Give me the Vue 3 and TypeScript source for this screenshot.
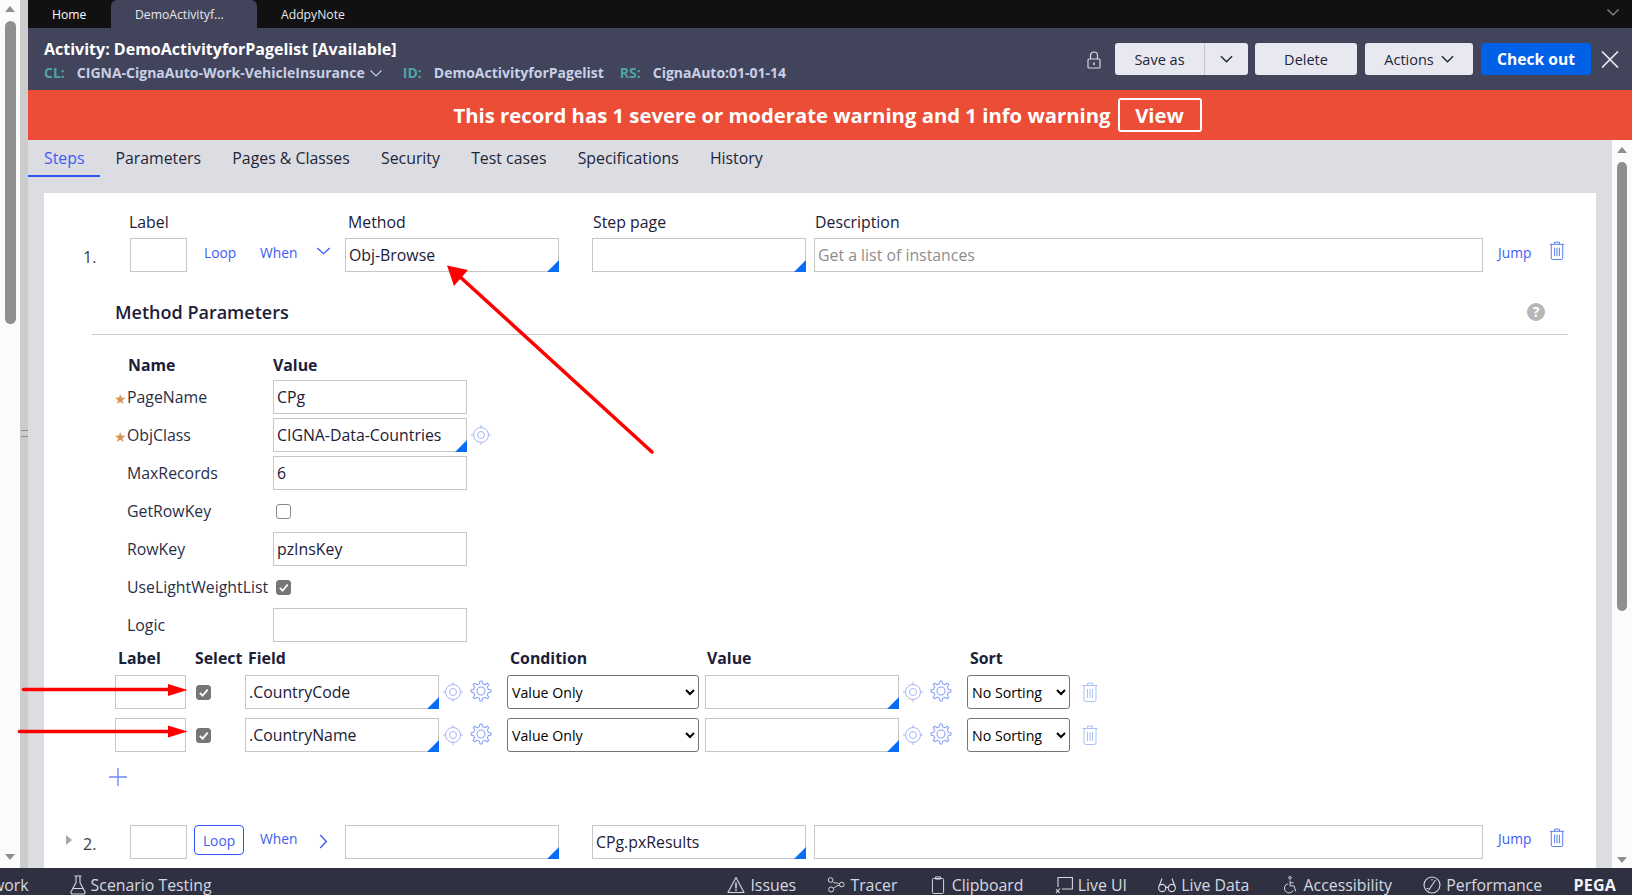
<script setup lang="ts">
const tabs = ['Steps', 'Parameters', 'Pages & Classes', 'Security', 'Test cases', 'Specifications', 'History']

interface Param { name: string; req?: boolean; kind: 'text' | 'auto' | 'check'; value?: string; checked?: boolean }
const params: Param[] = [
  { name: 'PageName', req: true, kind: 'text', value: 'CPg' },
  { name: 'ObjClass', req: true, kind: 'auto', value: 'CIGNA-Data-Countries' },
  { name: 'MaxRecords', kind: 'text', value: '6' },
  { name: 'GetRowKey', kind: 'check', checked: false },
  { name: 'RowKey', kind: 'text', value: 'pzInsKey' },
  { name: 'UseLightWeightList', kind: 'check', checked: true },
  { name: 'Logic', kind: 'text', value: '' },
]
const fields = ['.CountryCode', '.CountryName']

const tools = [
  { icon: 'i-warn', label: 'Issues' },
  { icon: 'i-tracer', label: 'Tracer' },
  { icon: 'i-clip', label: 'Clipboard' },
  { icon: 'i-liveui', label: 'Live UI' },
  { icon: 'i-glasses', label: 'Live Data' },
  { icon: 'i-access', label: 'Accessibility' },
  { icon: 'i-gauge', label: 'Performance' },
]

function gearPath(): string {
  const pts: string[] = []
  const teeth = 8
  for (let i = 0; i < teeth; i++) {
    const a = (i / teeth) * Math.PI * 2
    const step = (Math.PI * 2) / teeth
    const seq: [number, number][] = [[7.4, -0.5], [7.4, -0.27], [10, -0.14], [10, 0.14], [7.4, 0.27]]
    for (const [r, f] of seq) {
      const t = a + f * step
      pts.push(`${(11 + r * Math.sin(t)).toFixed(2)} ${(11 - r * Math.cos(t)).toFixed(2)}`)
    }
  }
  return 'M' + pts.join('L') + 'Z'
}
const gear = gearPath()
</script>

<template>
  <div class="app">
    <svg class="defs" width="0" height="0" aria-hidden="true">
      <defs>
        <symbol id="i-target" viewBox="0 0 20 20">
          <g fill="none" stroke="currentColor" stroke-width="1">
            <circle cx="10" cy="10" r="7.5" />
            <circle cx="10" cy="10" r="3.5" />
            <path d="M10 0v2.5M10 17.5V20M0 10h2.5M17.5 10H20" />
          </g>
        </symbol>
        <symbol id="i-gear" viewBox="0 0 22 22">
          <g fill="none" stroke="currentColor" stroke-width="1.1" stroke-linejoin="round">
            <path :d="gear" />
            <circle cx="11" cy="11" r="4" />
          </g>
        </symbol>
        <symbol id="i-trash" viewBox="0 0 16 20">
          <g fill="none" stroke="currentColor" stroke-width="1">
            <path d="M0.5 3.5h15M5.5 3.5V1.2h5v2.3M2 3.5v14.6a1.4 1.4 0 0 0 1.4 1.4h9.2a1.4 1.4 0 0 0 1.4-1.4V3.5" />
            <path d="M5.5 7v9M8 7v9M10.5 7v9" />
          </g>
        </symbol>
        <symbol id="i-warn" viewBox="0 0 18 18">
          <g fill="none" stroke="currentColor" stroke-width="1.1">
            <path d="M9 1.5 17 16.5H1Z" stroke-linejoin="round" />
            <path d="M9 6.5v6M9 13.6v1.4" stroke-width="1.6" />
          </g>
        </symbol>
        <symbol id="i-tracer" viewBox="0 0 20 18">
          <g fill="none" stroke="currentColor" stroke-width="1.1">
            <circle cx="4" cy="3.5" r="2.6" />
            <circle cx="16.4" cy="8.5" r="2.6" />
            <circle cx="4.6" cy="14" r="2.8" />
            <path d="M6.3 5C8 8.5 11 5 13.8 8.2M14 9.5C11.5 9.2 9.5 10.8 7.2 12.8" />
          </g>
        </symbol>
        <symbol id="i-clip" viewBox="0 0 14 20">
          <g fill="none" stroke="currentColor" stroke-width="1.1">
            <rect x="0.8" y="2.8" width="12.4" height="16.6" rx="1.2" />
            <path d="M4.2 3V1h5.6v2.4H4.2Z" />
          </g>
        </symbol>
        <symbol id="i-liveui" viewBox="0 0 18 18">
          <g fill="none" stroke="currentColor" stroke-width="1.1">
            <path d="M3 11V1.5h14.4v11.5H7" />
            <path d="M1 17 5 12.5M1.2 13.5l3.4 3.4" />
          </g>
        </symbol>
        <symbol id="i-glasses" viewBox="0 0 18 16">
          <g fill="none" stroke="currentColor" stroke-width="1.1">
            <circle cx="4.2" cy="11" r="3.6" />
            <circle cx="13.8" cy="11" r="3.6" />
            <path d="M7.6 10.4h2.8M1 9.5 4 1.5M17 9.5 14 1.5" />
          </g>
        </symbol>
        <symbol id="i-access" viewBox="0 0 16 20">
          <g fill="none" stroke="currentColor" stroke-width="1.1">
            <circle cx="8" cy="2" r="1.4" />
            <path d="M8 5v6h4.4l2 6M8 7.6h4" />
            <path d="M5.6 8.6a5.2 5.2 0 1 0 6 7.4" />
          </g>
        </symbol>
        <symbol id="i-gauge" viewBox="0 0 18 18">
          <g fill="none" stroke="currentColor" stroke-width="1.1">
            <circle cx="9" cy="9" r="8" />
            <path d="M5.5 14.5 12.5 4M3.5 12.5h2M9 3V4.5" />
          </g>
        </symbol>
        <symbol id="i-flask" viewBox="0 0 16 20">
          <g fill="none" stroke="currentColor" stroke-width="1.1">
            <path d="M4.5 1h7M6 1v6.5L1 17a1.4 1.4 0 0 0 1.2 2h11.6A1.4 1.4 0 0 0 15 17L10 7.500V1M3.500 13.500h9" />
          </g>
        </symbol>
      </defs>
    </svg>

    <div class="upper">
      <div class="outer-scroll">
        <span class="tri up outer-up"></span>
        <span class="outer-thumb"></span>
        <span class="tri down outer-down"></span>
      </div>
      <div class="splitter"><span class="grip"></span></div>

      <div class="main">
        <div class="doc-tabs">
          <span class="doc-tab first">Home</span>
          <span class="doc-tab active">DemoActivityf...</span>
          <span class="doc-tab last">AddpyNote</span>
          <svg class="doc-more" viewBox="0 0 12 7" width="12" height="7">
            <path d="M0.5 0.5 6 6 11.500 0.500" fill="none" stroke="#8e8f96" stroke-width="1.2" />
          </svg>
        </div>

        <header class="rule-head">
          <div class="titles">
            <div class="title">Activity: DemoActivityforPagelist [Available]</div>
            <div class="meta">
              <span class="k">CL:</span><span class="v">CIGNA-CignaAuto-Work-VehicleInsurance</span>
              <svg class="meta-chev" viewBox="0 0 12 7" width="12" height="7">
                <path d="M0.500 0.500 6 6 11.500 0.500" fill="none" stroke="#c9d0e6" stroke-width="1.1" />
              </svg>
              <span class="k id">ID:</span><span class="v">DemoActivityforPagelist</span>
              <span class="k rs">RS:</span><span class="v">CignaAuto:01-01-14</span>
            </div>
          </div>
          <div class="actions">
            <svg class="lock" viewBox="0 0 14 18" width="14" height="18">
              <g fill="none" stroke="#d5d8e4" stroke-width="1.2">
                <path d="M3.500 8V4.500a3.500 3.500 0 0 1 7 0V8" />
                <rect x="1" y="8" width="12" height="9" rx="1" />
                <path d="M7 11.500v2.500" stroke-width="1.600" />
              </g>
            </svg>
            <div class="btn-split">
              <button class="btn save">Save as</button>
              <button class="btn caret">
                <svg viewBox="0 0 14 8" width="13" height="8"><path d="M1 1 7 7 13 1" fill="none" stroke="#22253a" stroke-width="1.500" /></svg>
              </button>
            </div>
            <button class="btn delete">Delete</button>
            <button class="btn acts">Actions
              <svg viewBox="0 0 14 8" width="13" height="8"><path d="M1 1 7 7 13 1" fill="none" stroke="#22253a" stroke-width="1.500" /></svg>
            </button>
            <button class="btn checkout">Check out</button>
            <svg class="close" viewBox="0 0 18 17" width="18" height="17">
              <path d="M1 0.500 17 16.500M17 0.500 1 16.500" stroke="#e8e9f0" stroke-width="1.700" fill="none" />
            </svg>
          </div>
        </header>

        <div class="banner">
          <span>This record has 1 severe or moderate warning and 1 info warning</span>
          <button class="view">View</button>
        </div>

        <div class="body">
          <div class="work">
            <nav class="rule-tabs">
              <span v-for="(t, i) in tabs" :key="t" class="rule-tab" :class="{ on: i === 0 }">{{ t }}</span>
            </nav>

            <section class="panel">
              <div class="step step-one">
                <span class="cap c-label">Label</span>
                <span class="cap c-method">Method</span>
                <span class="cap c-page">Step page</span>
                <span class="cap c-desc">Description</span>

                <span class="num c-num">1.</span>
                <input class="box c-label" readonly />
                <a class="link c-loop">Loop</a>
                <a class="link c-when">When</a>
                <svg class="c-chev chev-down" viewBox="0 0 16 9" width="15" height="8"><path d="M1 1 8 7.500 15 1" fill="none" stroke="#3d5cf5" stroke-width="1.500" /></svg>
                <div class="auto c-method"><input class="box" readonly value="Obj-Browse" /></div>
                <div class="auto c-page"><input class="box" readonly /></div>
                <input class="box c-desc" readonly placeholder="Get a list of instances" />
                <a class="link c-jump">Jump</a>
                <svg class="c-trash trash" width="16" height="19"><use href="#i-trash" /></svg>
              </div>

              <div class="mp-head">
                <h3>Method Parameters</h3>
                <span class="help">?</span>
              </div>

              <div class="params">
                <b class="th">Name</b><b class="th val">Value</b>
                <template v-for="p in params" :key="p.name">
                  <span class="pname"><i class="star" :class="{ show: p.req }">★</i>{{ p.name }}</span>
                  <div class="pval">
                    <span v-if="p.kind === 'check'" class="cb" :class="{ checked: p.checked }">
                      <svg v-if="p.checked" viewBox="0 0 12 12" width="11" height="11"><path d="M2 6.500 5 9.500 10.500 2.800" fill="none" stroke="#fff" stroke-width="2" /></svg>
                    </span>
                    <div v-else-if="p.kind === 'auto'" class="auto w194"><input class="box" readonly :value="p.value" /></div>
                    <input v-else class="box w194" readonly :value="p.value" />
                    <svg v-if="p.kind === 'auto'" class="tgt" width="20" height="20"><use href="#i-target" /></svg>
                  </div>
                </template>
              </div>

              <div class="fields">
                <b class="fh">Label</b><b class="fh">Select</b><b class="fh fh-field">Field</b><b class="fh fh-cond">Condition</b><b class="fh fh-val">Value</b><b class="fh fh-sort">Sort</b><span></span>
                <template v-for="f in fields" :key="f">
                  <input class="box flabel" readonly />
                  <div class="fcheck"><span class="cb checked">
                    <svg viewBox="0 0 12 12" width="11" height="11"><path d="M2 6.500 5 9.500 10.500 2.800" fill="none" stroke="#fff" stroke-width="2" /></svg>
                  </span></div>
                  <div class="fcell">
                    <div class="auto w194"><input class="box" readonly :value="f" /></div>
                    <svg class="tgt f" width="20" height="20"><use href="#i-target" /></svg>
                    <svg class="gr" width="22" height="22"><use href="#i-gear" /></svg>
                  </div>
                  <div><select class="sel cond"><option>Value Only</option></select></div>
                  <div class="fcell">
                    <div class="auto w194"><input class="box" readonly /></div>
                    <svg class="tgt f" width="20" height="20"><use href="#i-target" /></svg>
                    <svg class="gr" width="22" height="22"><use href="#i-gear" /></svg>
                  </div>
                  <div><select class="sel sort"><option>No Sorting</option></select></div>
                  <svg class="ftrash" width="16" height="20"><use href="#i-trash" /></svg>
                </template>
              </div>

              <div class="add-row">
                <svg viewBox="0 0 18 18" width="18" height="18"><path d="M9 0v18M0 9h18" stroke="#6f8cf5" stroke-width="1.400" fill="none" /></svg>
              </div>

              <div class="step step-two">
                <span class="expander c-num"><span class="mini-tri"></span><span class="num">2.</span></span>
                <input class="box c-label" readonly />
                <a class="link c-loop loop-on">Loop</a>
                <a class="link c-when">When</a>
                <svg class="c-chev chev-right" viewBox="0 0 9 16" width="9" height="15"><path d="M1 1 7.500 8 1 15" fill="none" stroke="#3d5cf5" stroke-width="1.500" /></svg>
                <div class="auto c-method"><input class="box" readonly /></div>
                <div class="auto c-page"><input class="box" readonly value="CPg.pxResults" /></div>
                <input class="box c-desc" readonly />
                <a class="link c-jump">Jump</a>
                <svg class="c-trash trash" width="16" height="19"><use href="#i-trash" /></svg>
              </div>
            </section>
          </div>
          <div class="inner-scroll">
            <span class="tri up inner-up"></span>
            <span class="inner-thumb"></span>
            <span class="tri down inner-down"></span>
          </div>
        </div>
      </div>
    </div>

    <footer class="dock">
      <span class="dock-cut">work</span>
      <span class="tool scenario"><svg width="16" height="20"><use href="#i-flask" /></svg>Scenario Testing</span>
      <span class="dock-right">
        <span v-for="t in tools" :key="t.label" class="tool">
          <svg width="18" height="18"><use :href="'#' + t.icon" /></svg>{{ t.label }}
        </span>
        <b class="pega">PEGA</b>
      </span>
    </footer>

    <svg class="annot" width="1632" height="895" viewBox="0 0 1632 895">
      <g fill="#ff0000" stroke="#ff0000" stroke-linecap="round">
        <path d="M652 452 458 275" stroke-width="3.500" fill="none" />
        <path d="M447 265.500 468 270 454 286Z" stroke="none" />
        <path d="M23.500 689.500H172" stroke-width="3.500" fill="none" />
        <path d="M187.500 690 168 684V696Z" stroke="none" />
        <path d="M19.500 731.500H172" stroke-width="3.500" fill="none" />
        <path d="M187.500 731.500 168 725.500V737.500Z" stroke="none" />
      </g>
    </svg>
  </div>
</template>

<style>
html, body { margin: 0; padding: 0; background: #fff; overflow: hidden; }
</style>

<style scoped>
.app {
  position: relative;
  width: 1632px;
  height: 895px;
  display: flex;
  flex-direction: column;
  overflow: hidden;
  font-family: "Open Sans", "Noto Sans", sans-serif;
  font-size: 15.85px;
  color: #1b2038;
}
.defs { position: absolute; }
.annot { position: absolute; left: 0; top: 0; pointer-events: none; }
.upper { flex: 1; min-height: 0; display: flex; }

.outer-scroll {
  width: 20px;
  flex: none;
  background: #fbfbfb;
  display: flex;
  flex-direction: column;
  align-items: center;
}
.tri { width: 0; height: 0; border-left: 5px solid transparent; border-right: 5px solid transparent; flex: none; }
.tri.up { border-bottom: 6px solid #8f8f8f; }
.tri.down { border-top: 6px solid #8f8f8f; }
.outer-up { margin-top: 6px; }
.outer-thumb { width: 11px; height: 303px; margin-top: 9px; border-radius: 6px; background: #8f8f8f; }
.outer-down { margin-top: auto; margin-bottom: 8px; }
.splitter { width: 8px; flex: none; background: #cccccc; display: flex; align-items: center; justify-content: center; }
.grip { width: 7px; height: 5px; border-top: 1px solid #8f8f8f; border-bottom: 1px solid #8f8f8f; margin-top: -1px; }

.main { flex: 1; min-width: 0; display: flex; flex-direction: column; }

.doc-tabs {
  height: 28px;
  flex: none;
  background: #111111;
  display: flex;
  align-items: center;
  font-size: 12.2px;
  color: #fff;
}
.doc-tab { display: flex; align-items: center; height: 28px; }
.doc-tab.first { padding-left: 24px; width: 83px; box-sizing: border-box; }
.doc-tab.active {
  width: 146px;
  box-sizing: border-box;
  padding-left: 24px;
  background: #41445a;
  border-radius: 6px 6px 0 0;
  color: #e6e7ee;
}
.doc-tab.last { margin-left: 24px; color: #e6e7ee; }
.doc-more { margin-left: auto; margin-right: 13px; margin-top: -3px; }

.rule-head {
  height: 62px;
  flex: none;
  background: #41445a;
  display: flex;
  justify-content: space-between;
  align-items: flex-start;
  padding-left: 16px;
}
.title { font-size: 16px; font-weight: 700; line-height: 22px; color: #fff; margin-top: 10px; }
.meta { display: flex; align-items: center; font-size: 14px; font-weight: 700; line-height: 20px; margin-top: 3px; color: #c9d0e6; }
.meta .k { color: #4fa3a5; margin-right: 12px; }
.meta .id { margin-left: 21px; margin-right: 12px; }
.meta .rs { margin-left: 16px; margin-right: 12px; }
.meta-chev { margin-left: 5px; }

.actions { display: flex; align-items: center; padding-top: 15px; }
.lock { margin-right: 14px; margin-top: 2px; }
.btn {
  height: 32px;
  border: 0;
  border-radius: 3px;
  background: #e8e9f0;
  color: #22253a;
  font-family: inherit;
  font-size: 14.5px;
  padding: 0;
  display: flex;
  align-items: center;
  justify-content: center;
}
.btn-split { display: flex; }
.save { width: 90px; border-radius: 3px 0 0 3px; border-right: 1px solid #c5c6cd; }
.caret { width: 43px; border-radius: 0 3px 3px 0; }
.delete { width: 102px; margin-left: 7px; }
.acts { width: 108px; margin-left: 8px; gap: 7px; }
.checkout { width: 110px; margin-left: 8px; background: #0060e6; color: #fff; font-size: 15.6px; font-weight: 700; }
.close { margin-left: 10px; margin-right: 13px; }

.banner {
  height: 50px;
  flex: none;
  background: #eb4d36;
  color: #fff;
  display: flex;
  align-items: center;
  justify-content: center;
  gap: 7px;
  font-size: 20.3px;
  font-weight: 700;
  padding-right: 5px;
}
.view {
  width: 84px;
  height: 34px;
  box-sizing: border-box;
  background: transparent;
  border: 2px solid #fff;
  border-radius: 3px;
  color: #fff;
  font: inherit;
  padding: 0;
}

.body { flex: 1; min-height: 0; display: flex; }
.work { flex: 1; min-width: 0; background: #dcdde2; display: flex; flex-direction: column; overflow: hidden; }
.inner-scroll { width: 20px; flex: none; background: #fbfbfb; display: flex; flex-direction: column; align-items: center; }
.inner-up { margin-top: 7px; }
.inner-thumb { width: 10px; height: 449px; margin-top: 9px; border-radius: 5px; background: #8f8f8f; }
.inner-down { margin-top: auto; margin-bottom: 5px; }

.rule-tabs { height: 53px; flex: none; display: flex; align-items: flex-start; }
.rule-tab { height: 35px; line-height: 36px; padding: 0 15.6px; color: #22253a; box-sizing: content-box; }
.rule-tab.on { padding: 0 15.3px 0 16px; color: #3d5cf5; border-bottom: 2px solid #2f55f5; }

.panel {
  flex: 1;
  min-height: 0;
  margin: 0 16px;
  background: #fff;
  overflow: hidden;
}

.step {
  display: grid;
  grid-template-columns: 86px 57px 73px 56px 29px 214px 33px 214px 8px 669px 66px 1fr;
  align-items: center;
}
.step-one { grid-template-rows: 27px 34px; padding-top: 18px; }
.step-two { grid-template-rows: 34px; margin-top: 23px; }
.c-num { grid-column: 1; padding-left: 39px; }
.c-label { grid-column: 2; }
.c-loop { grid-column: 3; margin-left: 17px; }
.c-when { grid-column: 4; }
.c-chev { grid-column: 5; }
.c-method { grid-column: 6; }
.c-page { grid-column: 8; }
.c-desc { grid-column: 10; }
.c-jump { grid-column: 11; margin-left: 15px; }
.c-trash { grid-column: 12; }

.cap { line-height: 22px; align-self: start; }
.cap.c-method { padding-left: 3px; }
.cap.c-page, .cap.c-desc { padding-left: 1px; }
.cap.c-label { margin-left: -1px; }
.num { font-size: 16px; color: #3a3a3a; padding-top: 3px; }
.step-one .num { padding-top: 4px; }
.link { color: #3d5cf5; font-size: 13.8px; margin-top: -6px; }
.step-one .c-chev { margin-top: -8px; }
.step-two .link { margin-top: -7px; }
.chev-right { margin-left: 3px; margin-top: -2px; }
.trash { color: #4a78ee; margin-top: -9px; }

.box {
  display: block;
  width: 100%;
  height: 34px;
  box-sizing: border-box;
  margin: 0;
  border: 1px solid #c6c6c6;
  border-radius: 0;
  outline: 0;
  padding: 0 3px;
  background: #fff;
  color: #1b2038;
  font-family: inherit;
  font-size: inherit;
}
.box::placeholder { color: #8d8d8d; opacity: 1; }
.auto { position: relative; }
.auto::after {
  content: "";
  position: absolute;
  right: 0;
  bottom: 0;
  width: 12px;
  height: 12px;
  background: #0a6cf5;
  clip-path: polygon(100% 0, 100% 100%, 0 100%);
}
.w194 { width: 194px; flex: none; }

.mp-head {
  height: 63px;
  box-sizing: border-box;
  margin-left: 48px;
  width: 1476px;
  border-bottom: 1px solid #c9c9d2;
  padding: 0 23px 10px 23px;
  display: flex;
  align-items: flex-end;
  justify-content: space-between;
}
.mp-head h3 { margin: 0; font-size: 18px; line-height: 24px; font-weight: 600; color: #1b2038; }
.help {
  width: 18px;
  height: 18px;
  margin-bottom: 3px;
  border-radius: 50%;
  background: #b6b6b6;
  color: #fff;
  font-size: 14px;
  font-weight: 700;
  line-height: 18px;
  text-align: center;
}

.params {
  display: grid;
  grid-template-columns: 159px 260px;
  grid-auto-rows: 34px;
  grid-template-rows: 23px;
  row-gap: 4px;
  margin: 18px 0 0 70px;
  align-items: center;
}
.th { font-weight: 700; line-height: 21px; padding-top: 2px; padding-left: 14px; }
.th.val { padding-left: 0; }
.pname { display: flex; align-items: center; color: #2a2f48; }
.star { width: 13px; flex: none; font-style: normal; font-size: 14px; color: #d6954f; opacity: 0; margin-top: 3px; }
.star.show { opacity: 1; }
.pval { display: flex; align-items: center; }
.tgt { color: #a6b4f5; margin-left: 4px; flex: none; }
.tgt.f { margin-left: 4px; }
.gr { color: #8ea3f5; margin-left: 7px; margin-top: -3px; flex: none; }
.cb {
  width: 15px;
  height: 15px;
  margin-left: 3px;
  box-sizing: border-box;
  border: 1px solid #8a8a8a;
  border-radius: 3px;
  background: #fff;
  display: flex;
  align-items: center;
  justify-content: center;
  flex: none;
}
.cb.checked { background: #767676; border-color: #767676; }

.fields {
  display: grid;
  grid-template-columns: 80px 50px 262px 198px 262px 114px 30px;
  grid-auto-rows: 34px;
  grid-template-rows: 16px;
  row-gap: 9px;
  margin: 8px 0 0 71px;
  align-items: center;
}
.fh { font-weight: 700; line-height: 18px; white-space: nowrap; }
.fh:first-child { padding-left: 3px; }
.fh-field { padding-left: 3px; }
.fh-cond { padding-left: 3px; }
.fh-val { padding-left: 2px; }
.fh-sort { padding-left: 3px; }
.flabel { width: 71px; }
.fcheck .cb { margin-left: 1px; }
.fcell { display: flex; align-items: center; }
.sel {
  display: block;
  height: 34px;
  box-sizing: border-box;
  border: 1px solid #767676;
  border-radius: 3px;
  background: #fff;
  color: #000;
  font-family: inherit;
  font-size: 14.2px;
  padding: 0;
}
.cond { width: 192px; }
.sort { width: 103px; }
.ftrash { color: #a9c0f5; margin-left: 1px; }

.add-row { height: 50px; margin-left: 65px; display: flex; align-items: center; }

.expander { display: flex; align-items: center; padding-left: 22px; }
.mini-tri {
  width: 0;
  height: 0;
  border-top: 5px solid transparent;
  border-bottom: 5px solid transparent;
  border-left: 6px solid #a8a8a8;
  margin-right: 11px;
  margin-top: -5px;
}
.loop-on {
  width: 50px;
  height: 30px;
  margin: -4px 0 0 7px;
  box-sizing: border-box;
  border: 1px solid #2f55f5;
  border-radius: 4px;
  display: flex;
  align-items: center;
  justify-content: center;
  align-self: start;
}
.step-two .loop-on { margin-top: 0; }

.dock {
  height: 27px;
  box-sizing: border-box;
  padding: 7px 16px 0 0;
  flex: none;
  background: #2f3140;
  color: #d6d8e2;
  display: flex;
  align-items: center;
  overflow: hidden;
  white-space: nowrap;
}
.dock-cut { margin-left: -8px; }
.tool { display: inline-flex; align-items: center; gap: 5px; }
.tool svg { flex: none; color: #d6d8e2; }
.scenario { margin-left: 41px; }
.dock-right { margin-left: auto; display: flex; align-items: center; gap: 31.3px; }
.pega { font-weight: 700; font-size: 16px; color: #f2f3f6; letter-spacing: 0.2px; }
</style>
